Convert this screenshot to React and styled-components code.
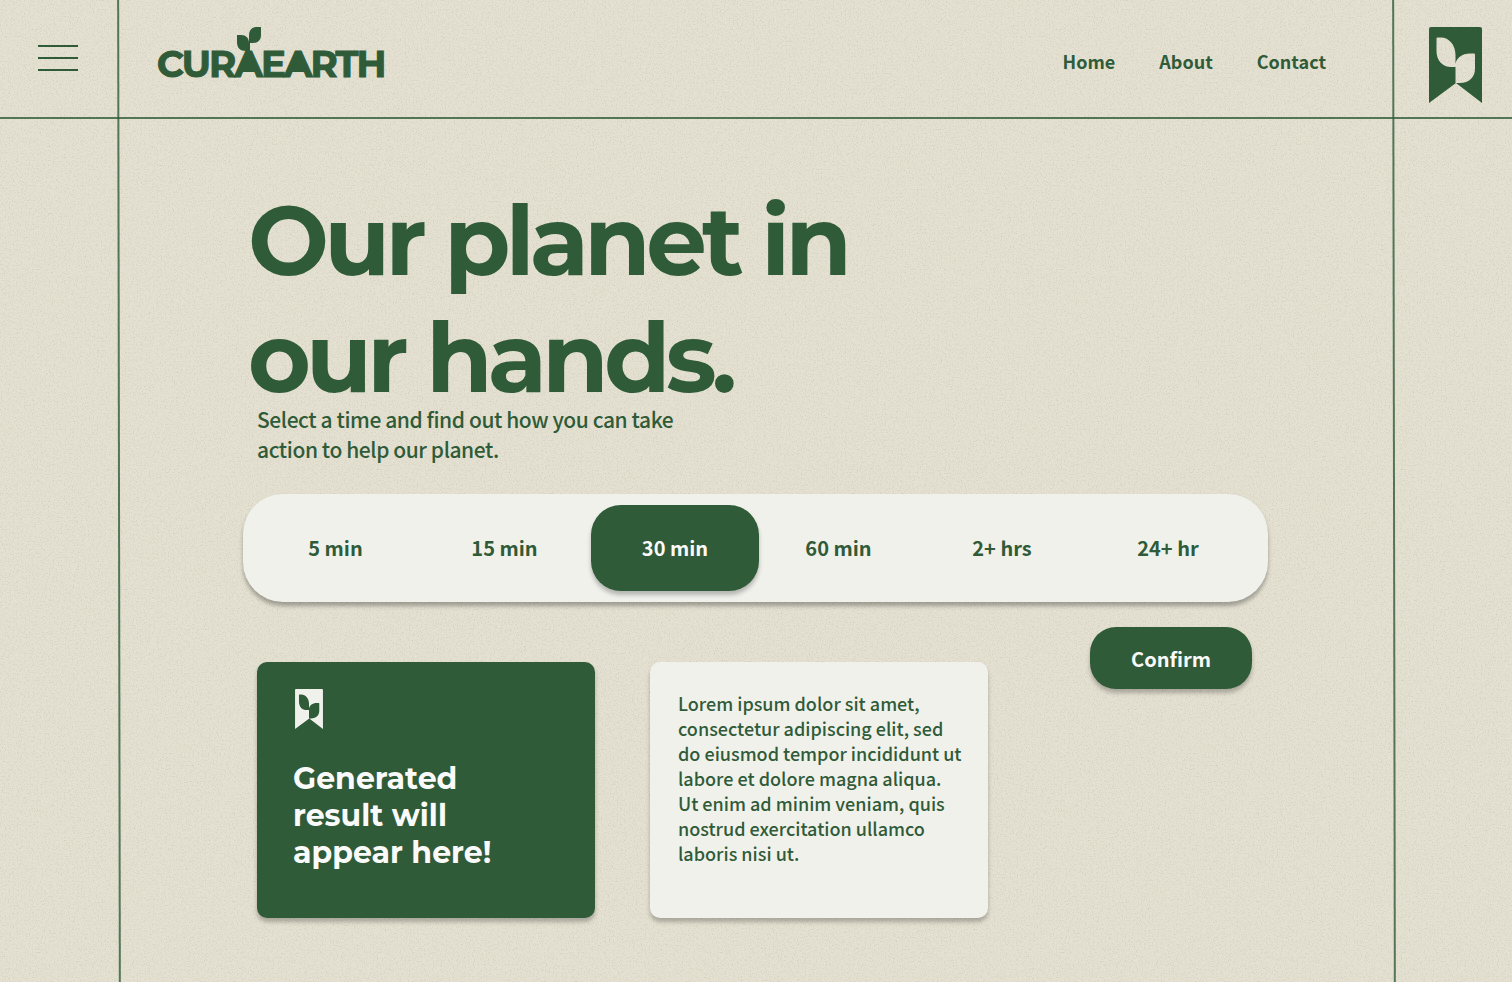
import React, { useState } from "react";
import styled, { createGlobalStyle } from "styled-components";

const green = "#305b38";
const paper = "#e5e1d2";
const cream = "#f1f1ec";
const sans = `"Source Sans Pro", "Noto Sans CJK SC", "Noto Sans", sans-serif`;
const display = `Montserrat, Inter, "Open Sans", sans-serif`;

const GlobalStyle = createGlobalStyle`
  *, *::before, *::after { box-sizing: border-box; }
  body {
    margin: 0;
    background: ${paper};
    color: ${green};
    font-family: ${sans};
  }
  h1, h2, p { margin: 0; }
`;

const Page = styled.div`
  position: relative;
  isolation: isolate;
  min-height: 100vh;
  overflow: hidden;
  display: grid;
  grid-template-columns: 118px 2px minmax(0, 1fr) 2px 117px;
  grid-template-rows: 117px 2px 1fr;
`;

const Grain = styled.svg`
  position: absolute;
  inset: 0;
  z-index: -1;
  width: 100%;
  height: 100%;
`;

const VerticalRule = styled.div`
  grid-column: ${(p) => p.$column};
  grid-row: 1 / -1;
  background: ${green};
  opacity: 0.8;
  transform: rotate(-0.1deg);
`;

const HorizontalRule = styled.div`
  grid-column: 1 / -1;
  grid-row: 2;
  background: ${green};
  opacity: 0.8;
`;

const Corner = styled.div`
  grid-column: ${(p) => p.$column};
  grid-row: 1;
  display: flex;
  justify-content: center;
  align-items: center;
`;

const MenuButton = styled.button`
  display: flex;
  flex-direction: column;
  gap: 10px;
  width: 40px;
  padding: 0;
  border: 0;
  background: none;
  cursor: pointer;
`;

const MenuLine = styled.span`
  height: 2px;
  background: ${green};
`;

const MenuCorner = styled(Corner)`
  padding: 0 2px 2px 0;
`;

const BadgeCorner = styled(Corner)`
  padding: 13px 0 0 4px;
`;

const Header = styled.header`
  grid-column: 3;
  grid-row: 1;
  display: flex;
  justify-content: space-between;
  align-items: center;
  padding: 5px 67px 0 38px;
`;

const LogoLink = styled.a`
  display: block;
  height: 56px;
  margin-bottom: 12px;
`;

const LogoDrawing = styled.svg`
  display: block;
  overflow: visible;
`;

const LogoText = styled.text`
  font-family: ${display};
  font-size: 37px;
  font-weight: 700;
  letter-spacing: -0.05em;
  fill: ${green};
  stroke: ${green};
  stroke-width: 1px;
`;

const Nav = styled.nav`
  display: flex;
  gap: 44px;
`;

const NavLink = styled.a`
  color: ${green};
  font-size: 18px;
  font-weight: 700;
  line-height: 26px;
  text-decoration: none;
`;

const Main = styled.main`
  grid-column: 3;
  grid-row: 3;
  padding: 63px 125px 64px 123px;
`;

const Intro = styled.div`
  padding-left: 5px;
`;

const Title = styled.h1`
  font-family: ${display};
  font-size: 96px;
  font-weight: 700;
  line-height: 117px;
  letter-spacing: -0.05em;
`;

const Lead = styled.p`
  max-width: 440px;
  margin-top: -12px;
  padding-left: 9px;
  font-size: 21px;
  font-weight: 500;
  line-height: 30px;
  letter-spacing: -0.02em;
`;

const TimeBar = styled.div`
  display: grid;
  grid-template-columns: 169fr 169fr 172fr 155fr 172fr 160fr;
  height: 108px;
  margin-top: 30px;
  padding: 11px 20px 11px 8px;
  border-radius: 40px;
  background: ${cream};
  box-shadow: 0 4px 4px rgba(0, 0, 0, 0.3);
`;

const TimeOption = styled.button`
  margin: 0 2px;
  padding: 0 0 2px;
  border: 0;
  border-radius: 30px;
  background: ${(p) => (p.$active ? green : "transparent")};
  box-shadow: ${(p) => (p.$active ? "0 4px 4px rgba(0, 0, 0, 0.25)" : "none")};
  color: ${(p) => (p.$active ? "#fafafa" : green)};
  font-family: ${sans};
  font-size: 20px;
  font-weight: 700;
  cursor: pointer;
`;

const Results = styled.div`
  display: flex;
  align-items: flex-start;
  gap: 55px;
  margin-top: 25px;
  padding: 0 16px 0 14px;
`;

const Card = styled.section`
  flex: 0 1 338px;
  min-height: 256px;
  margin-top: 35px;
  padding: ${(p) => (p.$dark ? "27px 36px" : "29px 24px 29px 28px")};
  border-radius: 10px;
  background: ${(p) => (p.$dark ? green : cream)};
  color: ${(p) => (p.$dark ? "#fafafa" : green)};
  box-shadow: 0 4px 4px rgba(0, 0, 0, 0.25);
`;

const CardIcon = styled.div`
  display: flex;
  padding-left: 2px;
`;

const CardTitle = styled.h2`
  max-width: 220px;
  margin-top: 31px;
  font-family: ${display};
  font-size: 30px;
  font-weight: 700;
  line-height: 37px;
`;

const CardText = styled.p`
  font-size: 18px;
  font-weight: 500;
  line-height: 25px;
`;

const ConfirmButton = styled.button`
  width: 162px;
  height: 62px;
  margin-left: auto;
  padding: 0;
  border: 0;
  border-radius: 26px;
  background: ${green};
  box-shadow: 0 4px 4px rgba(0, 0, 0, 0.25);
  color: #fafafa;
  font-family: ${sans};
  font-size: 20px;
  font-weight: 700;
  cursor: pointer;
`;

function PaperGrain() {
  return (
    <Grain aria-hidden="true">
      <filter id="grain" x="0" y="0" width="100%" height="100%" colorInterpolationFilters="sRGB">
        <feTurbulence type="fractalNoise" baseFrequency="0.75" numOctaves="2" seed="4" />
        <feColorMatrix values="0 0 0 0 0.68  0 0 0 0 0.67  0 0 0 0 0.59  0.9 0 0 0 -0.43" />
      </filter>
      <rect width="100%" height="100%" filter="url(#grain)" />
    </Grain>
  );
}

function Bookmark({ width, height, color }) {
  return (
    <svg width={width} height={height} viewBox="0 0 53 76" fill={color} fillRule="evenodd" aria-hidden="true">
      <path d="M2 0H51Q53 0 53 2V76L27 56L0 76V2Q0 0 2 0ZM8.500 10.500Q7.500 10.500 7.500 11.500V24C7.500 34 14 40 22 40H26.500V56H31C40 56 46 50 46 42V27.500Q46 26.500 45 26.500H41C33 26.500 27.500 31 26.500 37V28C26.500 18 20 10.500 12 10.500Z" />
    </svg>
  );
}

function Logo() {
  return (
    <LogoDrawing width="228" height="56" viewBox="0 0 228 56" fill={green} role="img" aria-label="CuraEarth">
      <LogoText x="-1" y="50">CURAEARTH</LogoText>
      <path d="M91 26L97 42H85Z" />
      <path d="M140 26L146 42H134Z" />
      <path d="M79 8H83C88 8 91 11 91 16V24H88C82 24 79 21 79 15Z" />
      <path d="M103 0V8C103 13 100 16 95 16H92V24H91V9C91 3 94 0 99 0Z" />
    </LogoDrawing>
  );
}

const times = ["5 min", "15 min", "30 min", "60 min", "2+ hrs", "24+ hr"];

export default function App() {
  const [selected, setSelected] = useState("30 min");
  return (
    <Page>
      <GlobalStyle />
      <PaperGrain />
      <MenuCorner $column={1}>
        <MenuButton type="button" aria-label="Open menu">
          <MenuLine />
          <MenuLine />
          <MenuLine />
        </MenuButton>
      </MenuCorner>
      <Header>
        <LogoLink href="#home">
          <Logo />
        </LogoLink>
        <Nav>
          <NavLink href="#home">Home</NavLink>
          <NavLink href="#about">About</NavLink>
          <NavLink href="#contact">Contact</NavLink>
        </Nav>
      </Header>
      <BadgeCorner $column={5}>
        <Bookmark width={53} height={76} color={green} />
      </BadgeCorner>
      <Main>
        <Intro>
          <Title>
            Our planet in
            <br />
            our hands.
          </Title>
          <Lead>
            Select a time and find out how you can take action to help our planet.
          </Lead>
        </Intro>
        <TimeBar role="group" aria-label="Available time">
          {times.map((time) => (
            <TimeOption
              key={time}
              type="button"
              $active={time === selected}
              aria-pressed={time === selected}
              onClick={() => setSelected(time)}
            >
              {time}
            </TimeOption>
          ))}
        </TimeBar>
        <Results>
          <Card $dark>
            <CardIcon>
              <Bookmark width={28} height={40} color={cream} />
            </CardIcon>
            <CardTitle>Generated result will appear here!</CardTitle>
          </Card>
          <Card>
            <CardText>
              Lorem ipsum dolor sit amet, consectetur adipiscing elit, sed do
              eiusmod tempor incididunt ut labore et dolore magna aliqua. Ut
              enim ad minim veniam, quis nostrud exercitation ullamco laboris
              nisi ut.
            </CardText>
          </Card>
          <ConfirmButton type="button">Confirm</ConfirmButton>
        </Results>
      </Main>
      <VerticalRule $column={2} />
      <VerticalRule $column={4} />
      <HorizontalRule />
    </Page>
  );
}
